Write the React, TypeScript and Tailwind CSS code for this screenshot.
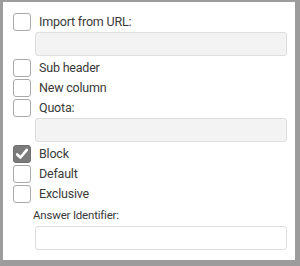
import React from "react";

const Box: React.FC<{ checked?: boolean }> = ({ checked }) =>
  checked ? (
    <span className="w-[18px] h-[18px] rounded-[3px] bg-[#7b7b7b] border border-[#6f6f6f] flex items-center justify-center shrink-0">
      <svg viewBox="0 0 16 16" className="w-[14px] h-[14px]">
        <path
          d="M2.5 8.5 L6.2 12 L13.5 3.2"
          fill="none"
          stroke="#fff"
          strokeWidth="3"
          strokeLinecap="round"
          strokeLinejoin="round"
        />
      </svg>
    </span>
  ) : (
    <span className="w-[18px] h-[18px] rounded-[3px] border border-[#a9a9a9] bg-white shrink-0" />
  );

const Row: React.FC<{ label: string; checked?: boolean }> = ({ label, checked }) => (
  <label className="flex items-center h-5 gap-2">
    <Box checked={checked} />
    <span className="text-[12.5px] tracking-[-0.2px] text-[#3a3a3a]">{label}</span>
  </label>
);

const App: React.FC = () => {
  return (
    <div
      className="w-[300px] h-[266px] bg-[#9c9c9c] pt-[2px] pl-[3px]"
      style={{ fontFamily: "Roboto, 'Liberation Sans', sans-serif" }}
    >
      <div className="w-[292px] h-[258px] bg-white pt-[10px] pl-[10px] pr-[8px] flex flex-col">
        <Row label="Import from URL:" />
        <div className="ml-[22px] h-6 rounded-[3px] border border-[#dedede] bg-[#f3f3f3]" />
        <div className="mt-[2px]">
          <Row label="Sub header" />
          <Row label="New column" />
          <Row label="Quota:" />
        </div>
        <div className="ml-[22px] h-6 rounded-[3px] border border-[#dedede] bg-[#f3f3f3]" />
        <div className="mt-[2px]">
          <Row label="Block" checked />
          <Row label="Default" />
          <Row label="Exclusive" />
        </div>
        <div className="ml-[20px] mt-[2px] h-5 flex items-center text-[11.5px] tracking-[-0.2px] text-[#3a3a3a]">
          Answer Identifier:
        </div>
        <div className="ml-[22px] h-6 rounded-[3px] border border-[#dedede] bg-white" />
      </div>
    </div>
  );
};

export default App;
